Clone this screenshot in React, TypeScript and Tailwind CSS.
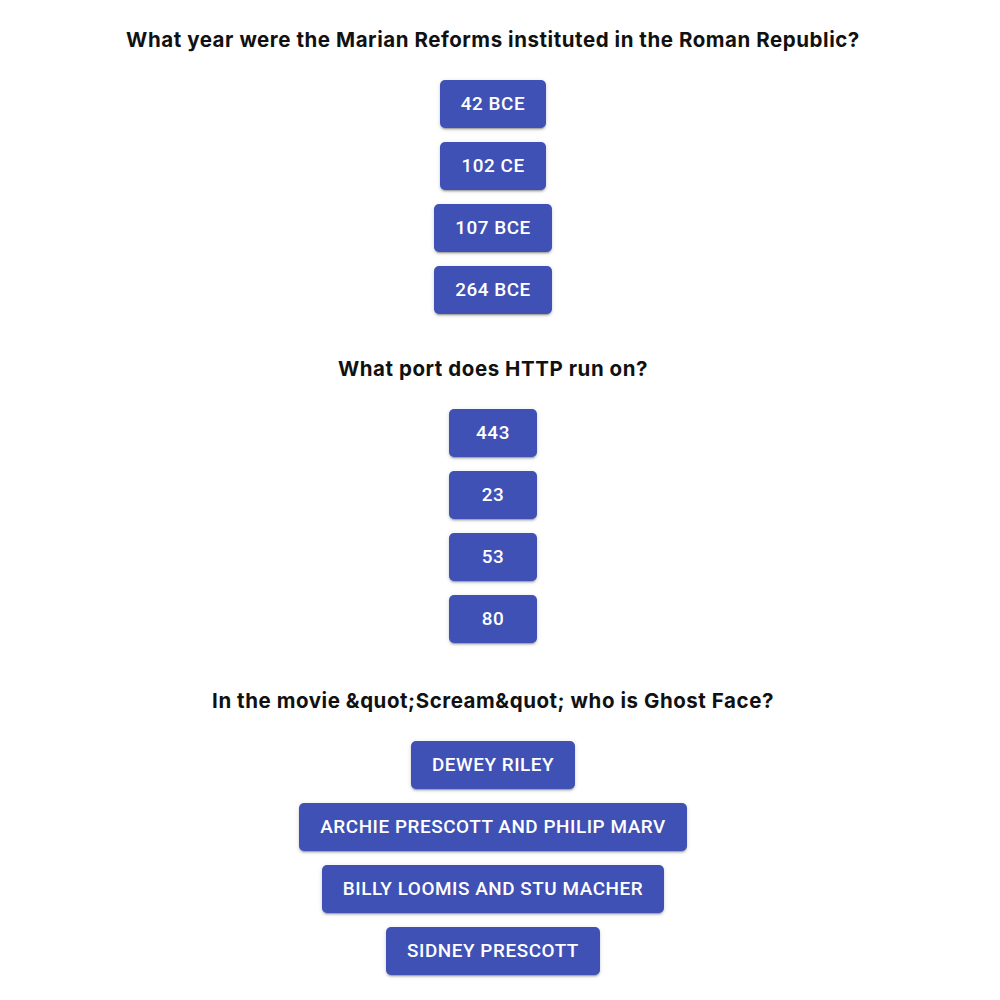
import React from "react";

const questions = [
  {
    q: "What year were the Marian Reforms instituted in the Roman Republic?",
    a: ["42 BCE", "102 CE", "107 BCE", "264 BCE"],
    mt: "",
  },
  { q: "What port does HTTP run on?", a: ["443", "23", "53", "80"], mt: "mt-[43px]" },
  {
    q: "In the movie &quot;Scream&quot; who is Ghost Face?",
    a: ["Dewey Riley", "Archie Prescott and Philip Marv", "Billy Loomis and Stu Macher", "Sidney Prescott"],
    mt: "mt-[46px]",
  },
];

export default function App() {
  return (
    <div className="w-[986px] h-[1000px] bg-white flex flex-col items-center pt-[28px]">
      {questions.map((item, i) => (
        <div key={i} className={"flex flex-col items-center " + item.mt}>
          <h3
            className="h-[24px] leading-[24px] text-[20.5px] tracking-[0.55px] font-bold text-[#111] whitespace-nowrap"
            style={{ fontFamily: "Inter, 'Noto Sans', sans-serif" }}
          >
            {item.q}
          </h3>
          <div className="mt-[28px] flex flex-col items-center gap-[14px]">
            {item.a.map((ans) => (
              <button
                key={ans}
                className="h-[48px] min-w-[88px] px-[21px] rounded-[5px] bg-[#3f51b5] text-white uppercase text-[18.9px] font-medium tracking-[0.55px] shadow-[0_3px_1px_-2px_rgba(0,0,0,0.2),0_2px_2px_0_rgba(0,0,0,0.14),0_1px_5px_0_rgba(0,0,0,0.12)]"
                style={{ fontFamily: "Roboto, sans-serif" }}
              >
                {ans}
              </button>
            ))}
          </div>
        </div>
      ))}
    </div>
  );
}
